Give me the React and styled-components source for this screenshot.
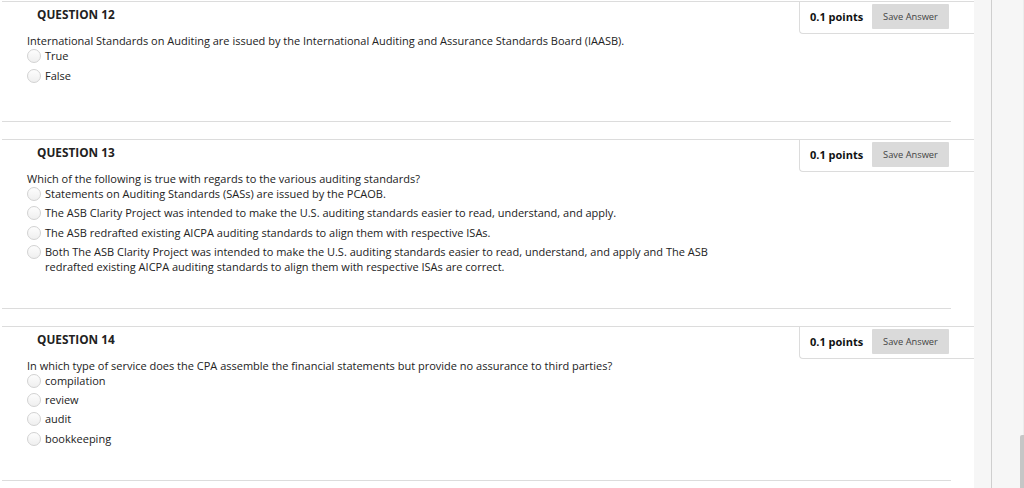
import React from "react";
import styled, { createGlobalStyle } from "styled-components";

const GlobalStyle = createGlobalStyle`
  html, body {
    margin: 0;
    padding: 0;
    background: #fff;
    overflow: hidden;
  }
  body {
    font-family: "Open Sans", "Liberation Sans", sans-serif;
    color: #2b2b2b;
  }
`;

const Page = styled.div`
  display: flex;
  height: 488px;
  width: 1024px;
`;

const Main = styled.div`
  width: 974px;
  padding-top: 1px;
  padding-left: 2px;
  box-sizing: border-box;
`;

const Side = styled.div`
  position: relative;
  flex: 1;
  background: #f6f6f6;
  display: flex;
`;

const SideLine = styled.div`
  width: 17px;
  border-right: 1px solid #cfcfcf;
`;

const SideRest = styled.div`
  flex: 1;
  border-right: 1px solid #ececec;
`;

const ScrollThumb = styled.div`
  position: absolute;
  right: 0;
  top: 435px;
  width: 4px;
  height: 60px;
  background: #c6c6c6;
  border-radius: 2px 0 0 0;
`;

const Block = styled.section`
  border-top: 1px solid #dcdcdc;
  margin-bottom: 17px;
`;

const Header = styled.div`
  display: flex;
  justify-content: space-between;
  align-items: flex-start;
`;

const Title = styled.h3`
  margin: 0;
  padding: 5px 0 0 35px;
  font-size: 11.8px;
  line-height: 15px;
  font-weight: 700;
  color: #222;
`;

const PointsBox = styled.div`
  display: flex;
  align-items: center;
  gap: 9px;
  padding: 2px 25px 4px 10px;
  border-left: 1px solid #dcdcdc;
  border-bottom: 1px solid #dcdcdc;
  border-bottom-left-radius: 4px;
  width: 175px;
  box-sizing: border-box;
`;

const Points = styled.span`
  font-size: 11px;
  font-weight: 700;
  color: #111;
  width: 53px;
  white-space: nowrap;
`;

const SaveButton = styled.button`
  width: 79px;
  height: 25px;
  border: none;
  border-radius: 1px;
  background: #dadada;
  color: #444;
  font-family: "Open Sans", "Liberation Sans", sans-serif;
  font-size: 9.3px;
  padding: 0;
`;

const Body = styled.div`
  padding: 0 0 0 25px;
  margin-right: 23px;
  border-bottom: 1px solid #dcdcdc;
  padding-bottom: ${(p) => p.$bottom}px;
`;

const Prompt = styled.p`
  margin: 0;
  font-size: 11px;
  line-height: 14px;
  color: #222;
`;

const Options = styled.ul`
  list-style: none;
  margin: 0;
  padding: 0;
  display: flex;
  flex-direction: column;
  gap: ${(p) => p.$gap}px;
`;

const Option = styled.li`
  display: flex;
  align-items: flex-start;
  gap: 4px;
  font-size: 11px;
  line-height: 15px;
  color: #222;
  max-width: 700px;
`;

const Radio = styled.span`
  flex: none;
  width: 12px;
  height: 12px;
  margin-top: 1px;
  border-radius: 50%;
  border: 1px solid #d2d2d2;
  background: linear-gradient(#fdfdfd, #efefef);
`;

const questions = [
  {
    no: 12,
    text:
      "International Standards on Auditing are issued by the International Auditing and Assurance Standards Board (IAASB).",
    options: ["True", "False"],
    gap: 5,
    bottom: 38,
  },
  {
    no: 13,
    text: "Which of the following is true with regards to the various auditing standards?",
    options: [
      "Statements on Auditing Standards (SASs) are issued by the PCAOB.",
      "The ASB Clarity Project was intended to make the U.S. auditing standards easier to read, understand, and apply.",
      "The ASB redrafted existing AICPA auditing standards to align them with respective ISAs.",
      "Both The ASB Clarity Project was intended to make the U.S. auditing standards easier to read, understand, and apply and The ASB redrafted existing AICPA auditing standards to align them with respective ISAs are correct.",
    ],
    gap: 4.3,
    bottom: 34,
  },
  {
    no: 14,
    text:
      "In which type of service does the CPA assemble the financial statements but provide no assurance to third parties?",
    options: ["compilation", "review", "audit", "bookkeeping"],
    gap: 4.3,
    bottom: 34,
  },
];

const Question = ({ q }) => (
  <Block>
    <Header>
      <Title>QUESTION {q.no}</Title>
      <PointsBox>
        <Points>0.1 points</Points>
        <SaveButton>Save Answer</SaveButton>
      </PointsBox>
    </Header>
    <Body $bottom={q.bottom}>
      <Prompt>{q.text}</Prompt>
      <Options $gap={q.gap}>
        {q.options.map((o) => (
          <Option key={o}>
            <Radio />
            <span>{o}</span>
          </Option>
        ))}
      </Options>
    </Body>
  </Block>
);

export default function App() {
  return (
    <>
      <GlobalStyle />
      <Page>
        <Main>
          {questions.map((q) => (
            <Question key={q.no} q={q} />
          ))}
        </Main>
        <Side>
          <SideLine />
          <SideRest />
          <ScrollThumb />
        </Side>
      </Page>
    </>
  );
}
